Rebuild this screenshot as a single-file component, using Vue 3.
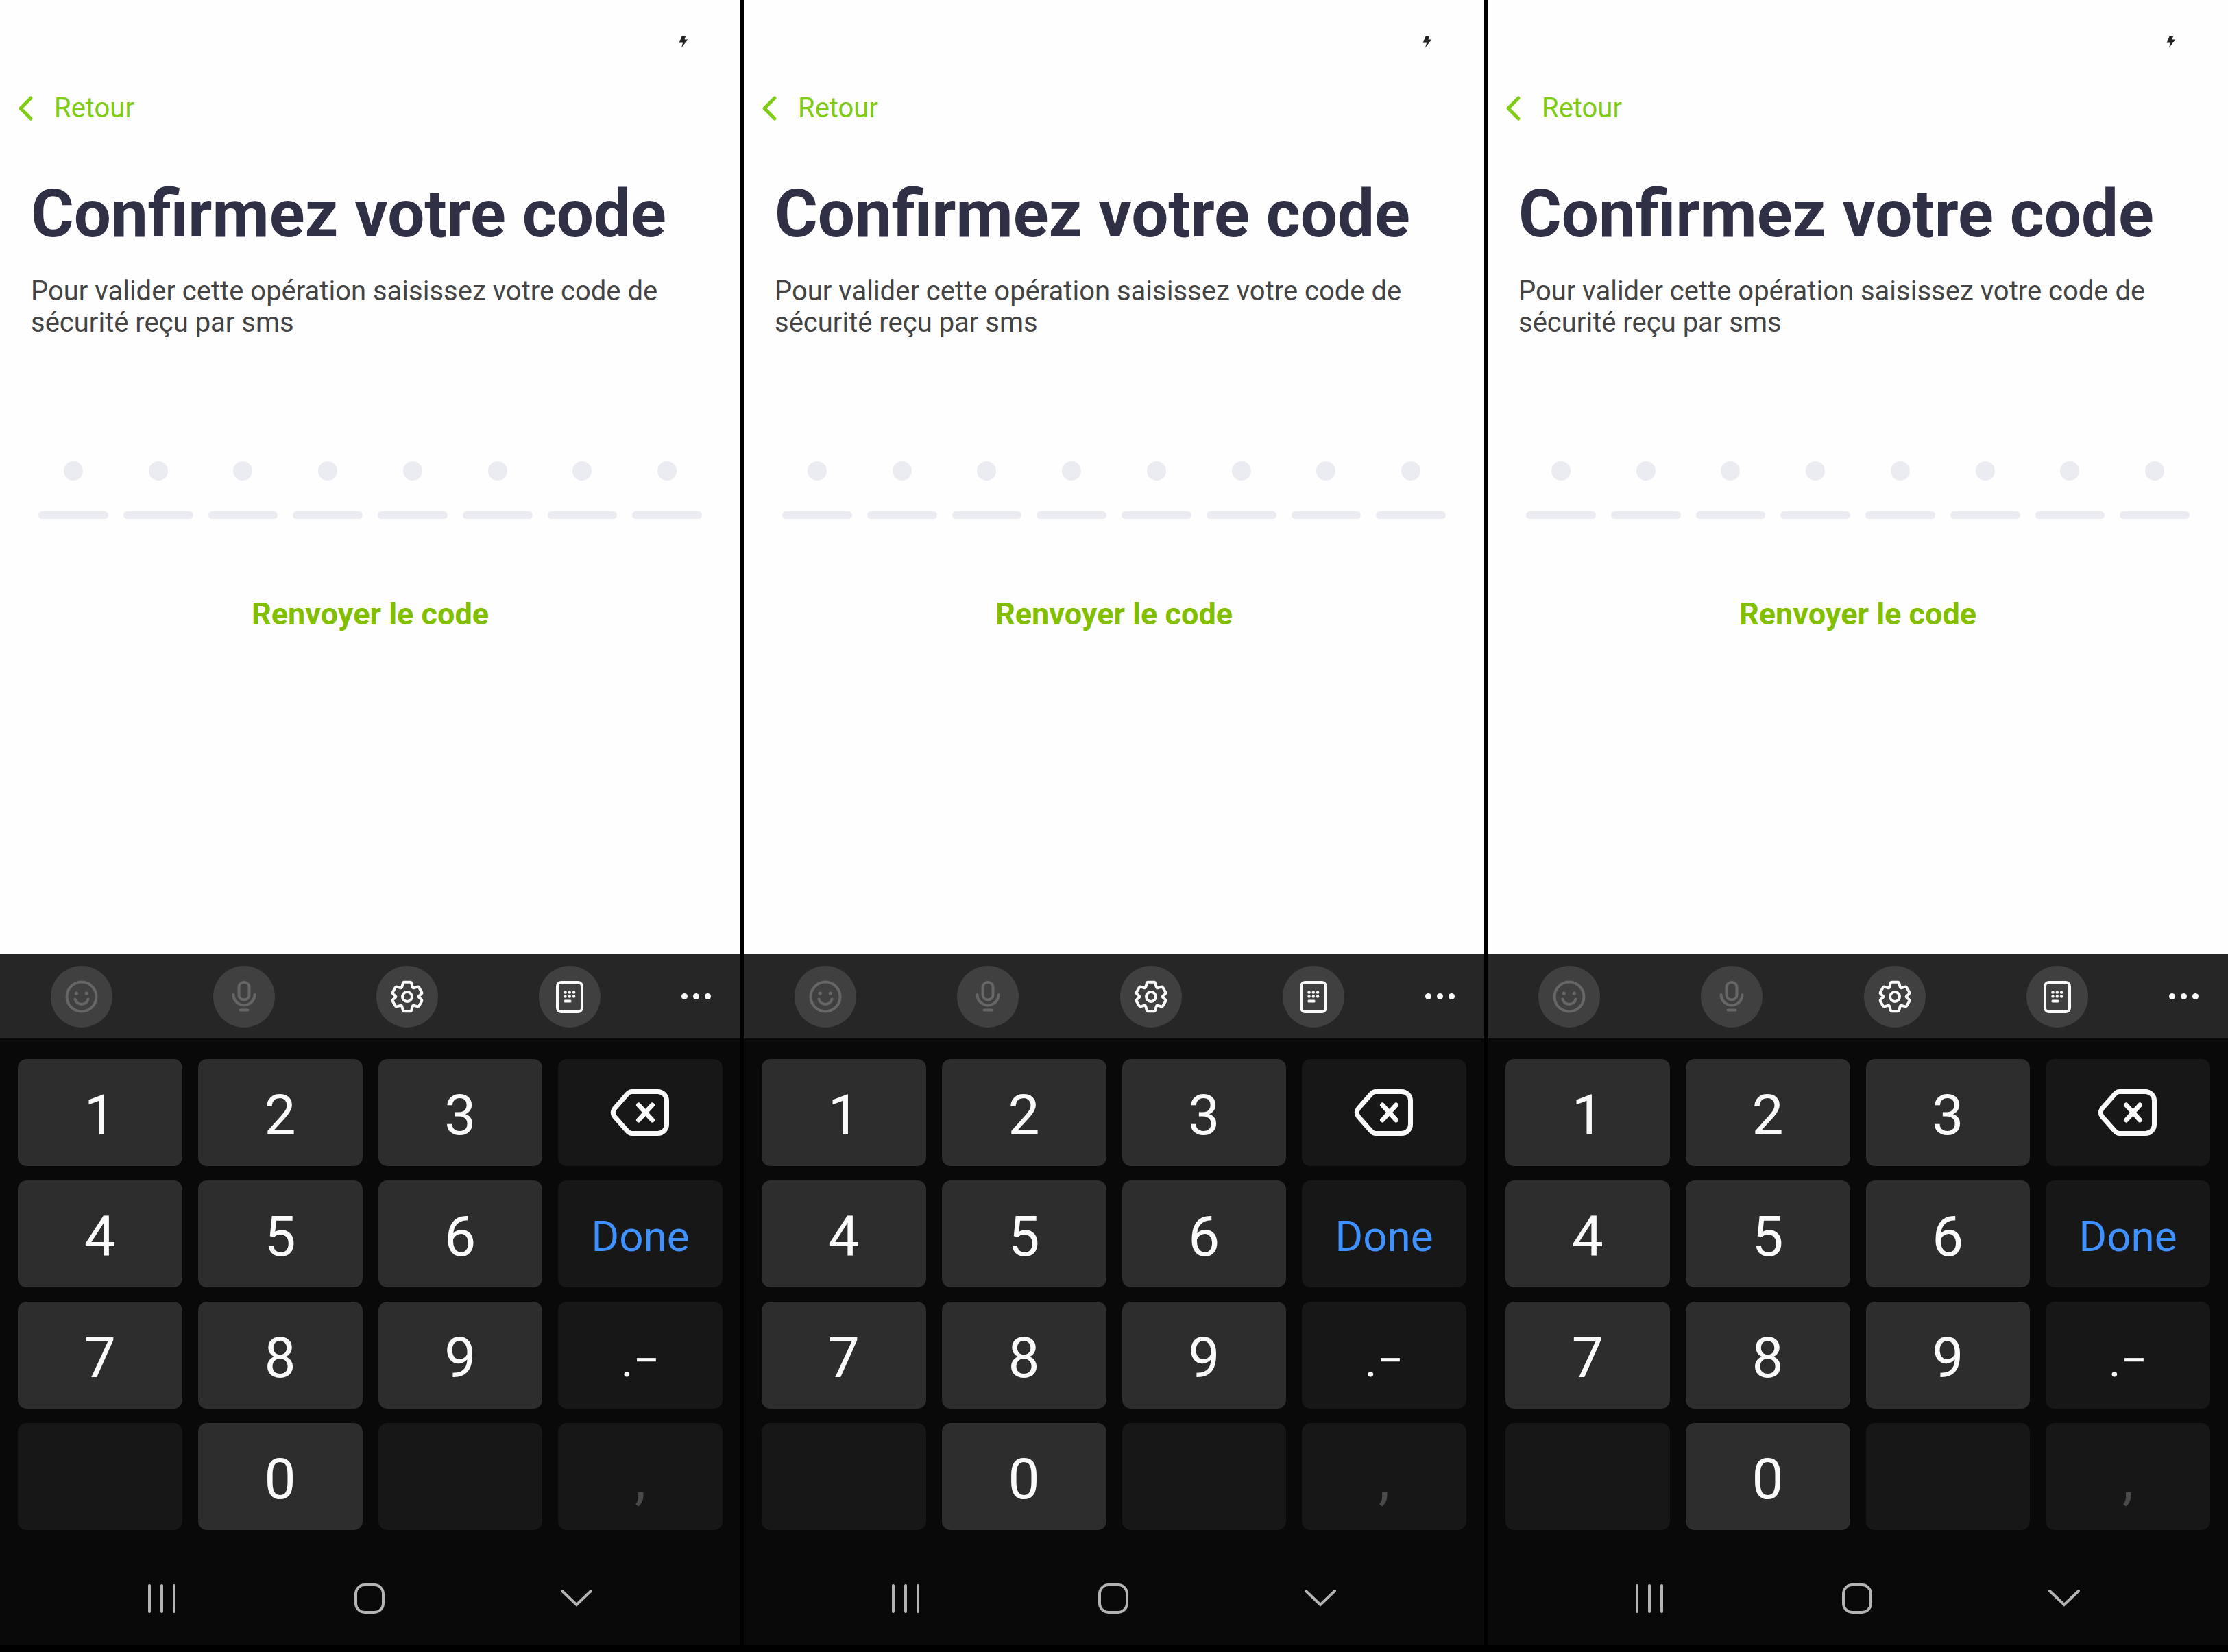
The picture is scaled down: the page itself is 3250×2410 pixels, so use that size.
<script setup>
const phones = [1, 2, 3]
const digits = 8
const keys = [
  { t: '1' }, { t: '2' }, { t: '3' }, { icon: 'back', dark: true },
  { t: '4' }, { t: '5' }, { t: '6' }, { t: 'Done', dark: true, cls: 'done' },
  { t: '7' }, { t: '8' }, { t: '9' }, { t: '.−', dark: true, cls: 'sign' },
  { t: '', dark: true }, { t: '0' }, { t: '', dark: true }, { t: ',', dark: true, cls: 'comma' },
]
</script>

<template>
  <main class="board">
    <section v-for="p in phones" :key="p" class="phone">
      <div class="screen">
        <header class="status">
          <svg width="14" height="18" viewBox="0 0 14 18" aria-hidden="true">
            <path d="M4.500 1h5.500l-1.500 4.500h5L4 17.500l2-7H.5z" fill="#222" />
          </svg>
        </header>
        <a href="#" class="back">
          <svg width="24" height="38" viewBox="0 0 24 38" aria-hidden="true">
            <path d="M20 4L5 19l15 15" fill="none" stroke="#80cc14" stroke-width="5" stroke-linecap="round" stroke-linejoin="round" />
          </svg>
          <span>Retour</span>
        </a>
        <h1>Confirmez votre code</h1>
        <p class="lead">Pour valider cette opération saisissez votre code de sécurité reçu par sms</p>
        <div class="code" role="group" aria-label="Code">
          <div v-for="d in digits" :key="d" class="cell">
            <i class="dot"></i>
            <i class="bar"></i>
          </div>
        </div>
        <button class="resend" type="button">Renvoyer le code</button>
      </div>

      <div class="tools">
        <button type="button" class="tool dim" aria-label="Emoji">
          <svg width="60" height="60" viewBox="0 0 60 60">
            <circle cx="30" cy="30" r="21.500" />
            <path d="M20.500 33.500a9.800 9.800 0 0 0 19 0" />
            <circle cx="22.300" cy="25" r="2.600" class="fill" />
            <circle cx="37.300" cy="25" r="2.600" class="fill" />
          </svg>
        </button>
        <button type="button" class="tool dim" aria-label="Voice">
          <svg width="60" height="60" viewBox="0 0 60 60">
            <rect x="22.500" y="9" width="15" height="25.500" rx="7" />
            <path d="M14.500 27a15.500 15.500 0 0 0 31 0M24.500 49.500h11" />
          </svg>
        </button>
        <button type="button" class="tool" aria-label="Settings">
          <svg width="60" height="60" viewBox="0 0 60 60">
            <path d="M25.500 8.800h9q1.300 0 1.700 1.400l1.500 5.600q.5 1.800 2.300 1.400l5.200-1.500q1.300-.3 2 .8l4 7q.6 1.200-.3 2.200l-3.700 3.200q-1.200 1.100 0 2.200l3.700 3.200q.9 1 .3 2.200l-4 7q-.7 1.100-2 .8l-5.200-1.500q-1.800-.4-2.300 1.400l-1.500 5.600q-.4 1.400-1.700 1.400h-9q-1.300 0-1.700-1.400l-1.500-5.600q-.5-1.800-2.300-1.400l-5.200 1.500q-1.300.3-2-.8l-4-7q-.6-1.200.3-2.200l3.700-3.200q1.200-1.100 0-2.200l-3.700-3.200q-.9-1-.3-2.200l4-7q.7-1.100 2-.8l5.200 1.500q1.800.4 2.300-1.400l1.500-5.600q.4-1.400 1.700-1.400z" />
            <circle cx="30" cy="30" r="7" />
          </svg>
        </button>
        <button type="button" class="tool" aria-label="Keyboard modes">
          <svg width="60" height="60" viewBox="0 0 60 60">
            <rect x="12" y="9" width="36" height="43" rx="6" />
            <g class="fill">
              <circle cx="23.500" cy="23.500" r="2.200" /><circle cx="29.800" cy="23.500" r="2.200" /><circle cx="36.100" cy="23.500" r="2.200" />
              <circle cx="23.500" cy="29.600" r="2.200" /><circle cx="29.800" cy="29.600" r="2.200" /><circle cx="36.100" cy="29.600" r="2.200" />
              <rect x="21.500" y="34.500" width="11" height="4" rx="1.500" />
            </g>
          </svg>
        </button>
        <button type="button" class="more" aria-label="More">
          <i></i><i></i><i></i>
        </button>
      </div>

      <div class="keys">
        <button v-for="(k, i) in keys" :key="i" type="button" class="key" :class="[{ dark: k.dark, pic: k.icon }, k.cls]" :aria-label="k.icon ? 'Backspace' : undefined">
          <svg v-if="k.icon" width="88" height="68" viewBox="0 0 88 68">
            <path d="M31.500 3.500H69.500A13 13 0 0 1 82.500 16.500V51.500A13 13 0 0 1 69.500 64.500H31.500Q28.500 64.500 25.500 61.500L6.500 40Q2 34 6.500 28L25.500 6.500Q28.500 3.500 31.500 3.500z" />
            <path d="M41.500 23l20 22M61.500 23l-20 22" />
          </svg>
          <template v-else>{{ k.t }}</template>
        </button>
      </div>

      <nav class="nav">
        <button type="button" aria-label="Recents">
          <svg width="48" height="48" viewBox="0 0 48 48"><path d="M6 5v38M24 5v38M42 5v38" /></svg>
        </button>
        <button type="button" aria-label="Home">
          <svg width="48" height="48" viewBox="0 0 48 48"><rect x="4" y="4" width="40" height="40" rx="13" /></svg>
        </button>
        <button type="button" aria-label="Hide keyboard">
          <svg width="48" height="48" viewBox="0 0 48 48"><path d="M3 13l21 20l21-20" stroke-linejoin="miter" /></svg>
        </button>
      </nav>
    </section>
  </main>
</template>

<style>
body {
  margin: 0;
  background: #000;
}
</style>

<style scoped>
.board {
  display: grid;
  grid-template-columns: repeat(3, 1fr);
  gap: 5px;
  box-sizing: border-box;
  min-height: 100vh;
  padding-bottom: 10px;
  background: #000;
  font-family: Roboto, "Liberation Sans", sans-serif;
}
.phone {
  display: flex;
  flex-direction: column;
  background: #090909;
}
button {
  margin: 0;
  padding: 0;
  border: 0;
  background: none;
  color: inherit;
  font: inherit;
}
svg {
  display: block;
}
.screen {
  display: flex;
  flex-direction: column;
  flex: 1;
  background: #fefefe;
}
.status {
  display: flex;
  justify-content: flex-end;
  padding: 52px 76px 0 0;
}
.back {
  display: flex;
  align-items: center;
  align-self: flex-start;
  gap: 30px;
  margin: 64px 0 0 25px;
  color: #80cc14;
  font-size: 40px;
  line-height: 48px;
  text-decoration: none;
}
h1 {
  margin: 74px 45px 0;
  color: #2f2f45;
  font-size: 96px;
  font-weight: 700;
  line-height: 112px;
}
.lead {
  margin: 34px 45px 0;
  color: #444;
  font-size: 40px;
  line-height: 46px;
}
.code {
  display: flex;
  gap: 22px;
  margin: 179px 56px 0;
}
.cell {
  display: flex;
  flex: 1;
  flex-direction: column;
  align-items: center;
  gap: 45px;
}
.dot {
  width: 28px;
  height: 28px;
  border-radius: 50%;
  background: #ebecf2;
}
.bar {
  width: 100%;
  height: 11px;
  border-radius: 6px;
  background: #ebecf2;
}
.resend {
  align-self: center;
  margin-top: 112px;
  color: #82bf00;
  font-size: 45px;
  font-weight: 700;
  line-height: 54px;
}
.tools {
  display: grid;
  grid-template-columns: repeat(4, 1fr) 130px;
  align-items: center;
  justify-items: center;
  height: 123px;
  background: #262626;
}
.tool {
  display: flex;
  align-items: center;
  justify-content: center;
  width: 90px;
  height: 90px;
  border-radius: 50%;
  background: #404040;
}
.tool svg {
  fill: none;
  stroke: #fafafa;
  stroke-width: 4;
  stroke-linecap: round;
  stroke-linejoin: round;
}
.tool.dim svg {
  stroke: #666;
}
.tool .fill {
  fill: #fafafa;
  stroke: none;
}
.tool.dim .fill {
  fill: #666;
}
.more {
  display: flex;
  gap: 8px;
}
.more i {
  width: 9px;
  height: 9px;
  border-radius: 50%;
  background: #fafafa;
}
.keys {
  display: grid;
  grid-template-columns: repeat(4, 1fr);
  grid-auto-rows: 156px;
  gap: 21px 23px;
  padding: 30px 26px 0;
}
.key {
  display: flex;
  align-items: center;
  justify-content: center;
  padding-top: 8px;
  border-radius: 13px;
  background: #2d2d2d;
  color: #fafafa;
  font-size: 82px;
  line-height: 96px;
}
.key.pic {
  padding-top: 0;
}
.key.dark {
  background: #171717;
}
.key.done {
  color: #3e91ff;
  font-size: 62px;
}
.key.sign {
  padding-top: 16px;
  font-size: 68px;
}
.key.comma {
  color: #4a4a4a;
}
.key svg {
  fill: none;
  stroke: #fafafa;
  stroke-width: 7;
  stroke-linecap: round;
}
.nav {
  display: flex;
  justify-content: space-between;
  padding: 76px 215px 44px 212px;
}
.nav svg {
  fill: none;
  stroke: #b4b4b4;
  stroke-width: 4;
  stroke-linecap: round;
}
</style>
